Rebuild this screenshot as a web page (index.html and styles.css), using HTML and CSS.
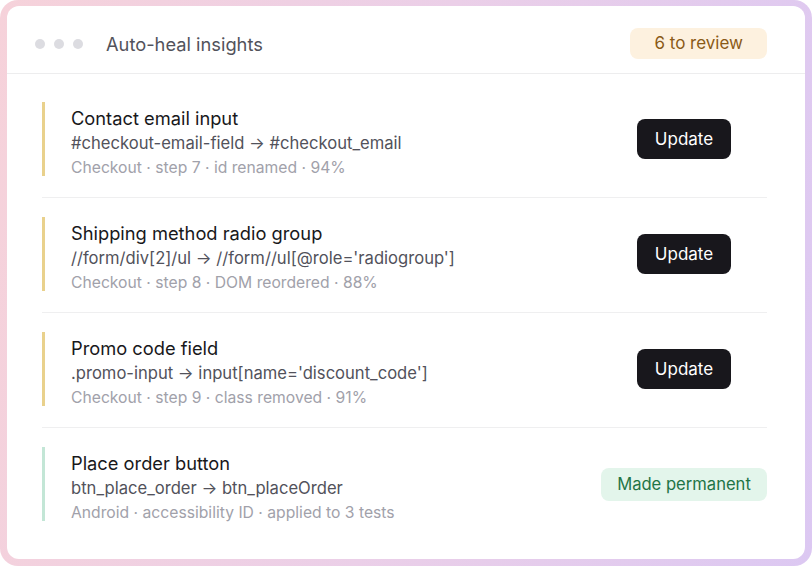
FILE: index.html
```html
<!DOCTYPE html>
<html lang="en">
<head>
    <meta charset="UTF-8">
    <meta name="viewport" content="width=device-width, initial-scale=1.0">
    <title>Auto-heal insights</title>
    <link rel="stylesheet" href="styles.css">
</head>
<body>
    <div class="frame">
        <div class="card">
            <div class="header">
                <div class="dots">
                    <span class="dot"></span>
                    <span class="dot"></span>
                    <span class="dot"></span>
                </div>
                <h2 class="title">Auto-heal insights</h2>
                <span class="pill pill-review">6 to review</span>
            </div>
            <div class="list">
                <div class="row">
                    <div class="info pending">
                        <p class="name">Contact email input</p>
                        <p class="change">#checkout-email-field → #checkout_email</p>
                        <p class="meta">Checkout · step 7 · id renamed · 94%</p>
                    </div>
                    <div class="action"><button class="btn">Update</button></div>
                </div>
                <div class="row">
                    <div class="info pending">
                        <p class="name">Shipping method radio group</p>
                        <p class="change">//form/div[2]/ul → //form//ul[@role='radiogroup']</p>
                        <p class="meta">Checkout · step 8 · DOM reordered · 88%</p>
                    </div>
                    <div class="action"><button class="btn">Update</button></div>
                </div>
                <div class="row">
                    <div class="info pending">
                        <p class="name">Promo code field</p>
                        <p class="change">.promo-input → input[name='discount_code']</p>
                        <p class="meta">Checkout · step 9 · class removed · 91%</p>
                    </div>
                    <div class="action"><button class="btn">Update</button></div>
                </div>
                <div class="row">
                    <div class="info done">
                        <p class="name">Place order button</p>
                        <p class="change">btn_place_order → btn_placeOrder</p>
                        <p class="meta">Android · accessibility ID · applied to 3 tests</p>
                    </div>
                    <div class="action"><span class="pill pill-done">Made permanent</span></div>
                </div>
            </div>
        </div>
    </div>
</body>
</html>
```

FILE: styles.css
```css
body {
    margin: 0;
    background: #ffffff;
    font-family: Inter, "Noto Sans", sans-serif;
}

.frame {
    width: 812px;
    height: 566px;
    box-sizing: border-box;
    padding: 6px 7px 7px 7px;
    border-radius: 18px;
    background: linear-gradient(100deg, #f6d2da 0%, #ebcfe8 50%, #dcc8f2 100%);
}

.card {
    height: 100%;
    background: #ffffff;
    border-radius: 12px;
    overflow: hidden;
}

.header {
    display: flex;
    align-items: center;
    padding: 22px 38px 14px 28px;
    border-bottom: 1px solid #ededee;
}

.dots {
    display: flex;
    gap: 9px;
}

.dot {
    width: 10px;
    height: 10px;
    border-radius: 50%;
    background: #dcdce1;
}

.title {
    flex: 1;
    margin: 0 0 0 23px;
    font-size: 18.3px;
    font-weight: 400;
    color: #52525b;
}

.pill {
    display: inline-block;
    font-size: 17px;
    line-height: 31px;
    padding: 0 24px;
    border-radius: 8px;
    white-space: nowrap;
}

.pill-review {
    background: #fdf1df;
    color: #8a5a16;
}

.pill-done {
    font-size: 16.6px;
    line-height: 33px;
    padding: 0 16px;
    background: #e3f5eb;
    color: #1f7446;
}

.list {
    padding: 9px 38px 0 35px;
}

.row {
    display: flex;
    align-items: center;
    padding: 19px 0 21px;
    border-top: 1px solid #efeff0;
}

.row:first-child {
    border-top: none;
}

.info {
    flex: 1;
    height: 74px;
    box-sizing: border-box;
    padding: 3px 0 0 26px;
    border-left: 3px solid #e9d18c;
}

.info.done {
    border-left-color: #c3e6d6;
}

.info p {
    margin: 0;
    white-space: nowrap;
}

.name {
    font-size: 18.3px;
    line-height: 26px;
    color: #18181b;
}

.change {
    font-size: 16.6px;
    line-height: 24px;
    color: #52525b;
}

.meta {
    font-size: 15.7px;
    line-height: 25px;
    color: #a1a1aa;
}

.action {
    flex: none;
    width: 166px;
    display: flex;
    justify-content: center;
}

.btn {
    font-family: inherit;
    font-size: 17px;
    height: 40px;
    padding: 0 18px;
    border: none;
    border-radius: 8px;
    background: #18171c;
    color: #ffffff;
    cursor: pointer;
}
```
